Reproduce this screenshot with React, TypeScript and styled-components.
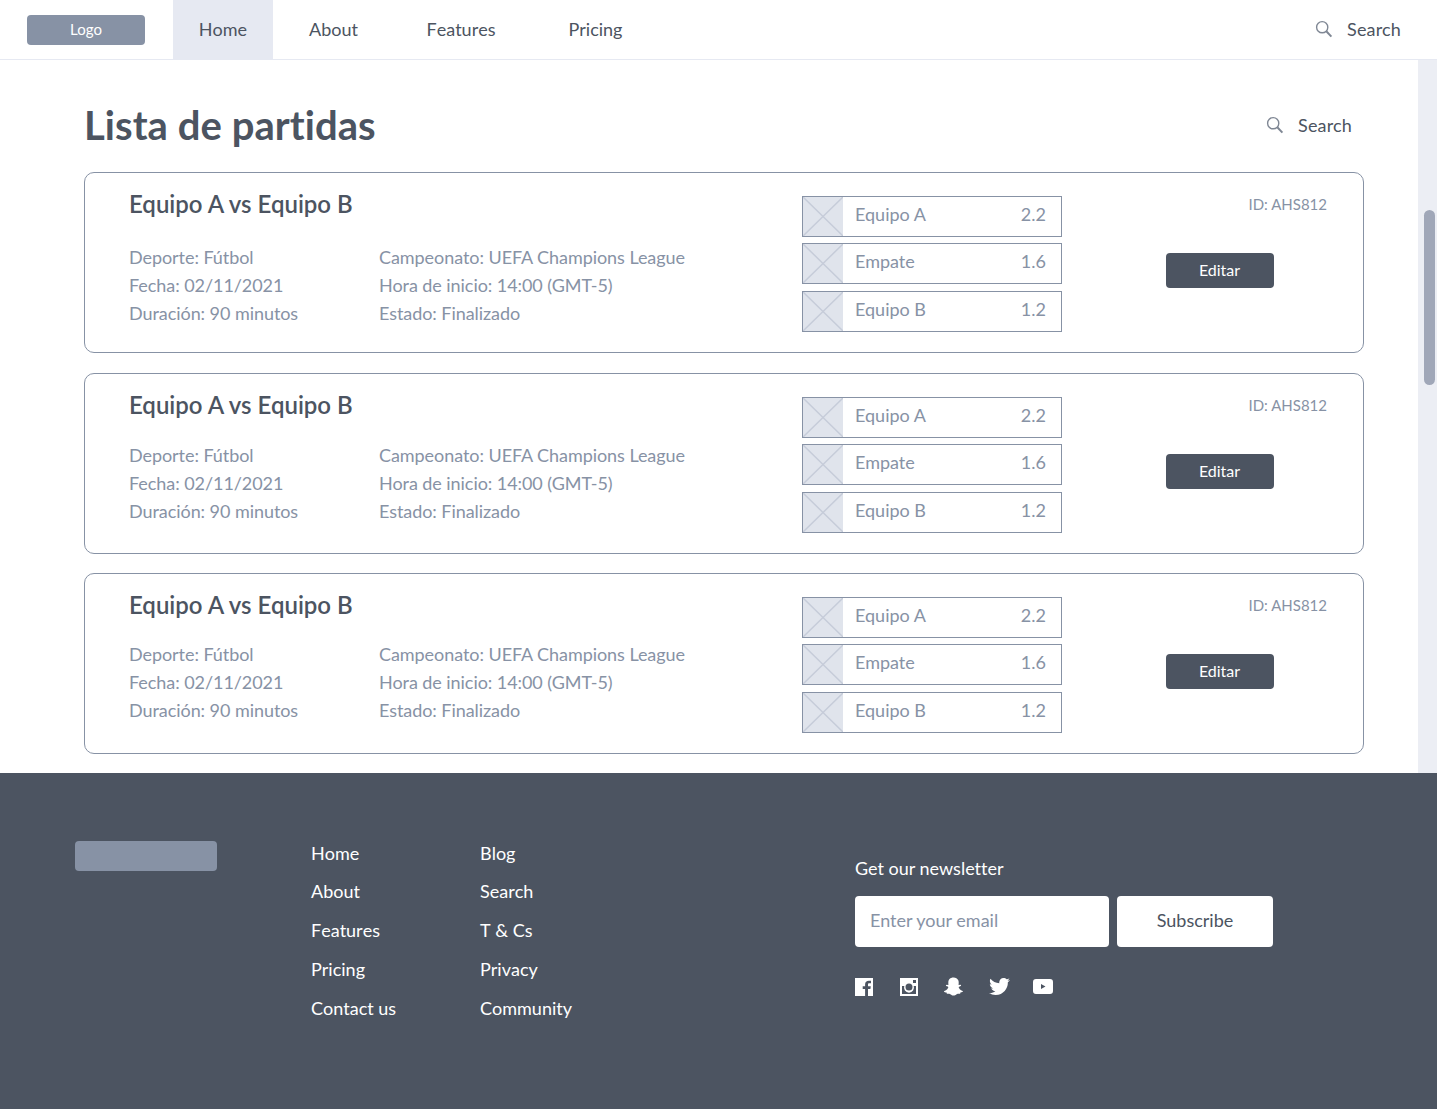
import React from 'react';
import styled, { createGlobalStyle } from 'styled-components';
import { FaSnapchatGhost, FaTwitter } from 'react-icons/fa';

const colors = {
  dark: '#4c5461',
  muted: '#8792a5',
  light: '#e6e9f2',
  tile: '#e0e4ec',
  cross: '#c6ccd9',
};

const GlobalStyle = createGlobalStyle`
  html, body {
    margin: 0;
    padding: 0;
    background: #fff;
    font-family: Lato, "Liberation Sans", sans-serif;
    font-variant-ligatures: none;
    overflow: hidden;
  }
  * { box-sizing: border-box; }
`;

const Page = styled.div`
  width: 1437px;
  height: 1109px;
  display: flex;
  flex-direction: column;
`;

const TopBar = styled.header`
  height: 60px;
  flex: none;
  display: flex;
  align-items: stretch;
  padding: 0 36px 0 27px;
  border-bottom: 1px solid ${colors.light};
`;

const LogoBox = styled.div`
  width: 118px;
  height: 30px;
  margin: 15px 28px 0 0;
  border-radius: 4px;
  background: ${colors.muted};
  color: #fff;
  font-size: 15px;
  line-height: 28px;
  text-align: center;
`;

const NavLink = styled.a<{ $width: number; $active?: boolean }>`
  width: ${props => props.$width}px;
  padding-bottom: 2px;
  display: flex;
  align-items: center;
  justify-content: center;
  font-size: 18px;
  font-kerning: none;
  color: ${colors.dark};
  background: ${props => (props.$active ? colors.light : 'transparent')};
`;

const SearchBox = styled.div`
  margin-left: auto;
  padding-bottom: 1px;
  display: flex;
  align-items: center;
  gap: 14px;
  font-size: 18px;
  letter-spacing: 0.15px;
  color: ${colors.dark};
`;

const Middle = styled.div`
  height: 713px;
  flex: none;
  display: flex;
`;

const Content = styled.main`
  width: 1418px;
  padding: 0 54px 0 84px;
`;

const TitleRow = styled.div`
  height: 112px;
  padding: 18px 12px 0 0;
  display: flex;
  align-items: center;
  justify-content: space-between;
`;

const Title = styled.h1`
  margin: 0;
  font-size: 40px;
  font-weight: 700;
  letter-spacing: 0.05px;
  color: ${colors.dark};
`;

const CardList = styled.div`
  display: flex;
  flex-direction: column;
  gap: 19.67px;
`;

const Card = styled.article`
  height: 181px;
  display: flex;
  padding: 0 36px 0 44px;
  border: 1px solid ${colors.muted};
  border-radius: 10px;
`;

const Info = styled.div`
  width: 673px;
  flex: none;
`;

const CardTitle = styled.h2`
  margin: 15px 0 0;
  font-size: 24px;
  line-height: 32px;
  font-weight: 600;
  color: ${colors.dark};
`;

const Details = styled.div<{ $top: number }>`
  margin-top: ${props => props.$top}px;
  display: grid;
  grid-template-columns: 250px 1fr;
  grid-auto-rows: 28px;
  font-size: 18px;
  line-height: 28px;
  letter-spacing: -0.06px;
  color: ${colors.muted};
`;

const Odds = styled.div`
  width: 260px;
  flex: none;
  padding-top: 23px;
  display: flex;
  flex-direction: column;
  gap: 6px;
`;

const OddRow = styled.div`
  height: 41px;
  display: flex;
  align-items: center;
  padding-right: 15px;
  border: 1px solid ${colors.muted};
  font-size: 18px;
  color: ${colors.muted};
  &:last-child {
    margin-top: 1px;
  }
`;

const Tile = styled.svg`
  width: 40px;
  height: 39px;
  flex: none;
  background: ${colors.tile};
`;

const OddName = styled.span`
  margin: 0 0 5px 12px;
`;

const Price = styled.span`
  margin: 0 0 5px auto;
`;

const Side = styled.div`
  flex: 1;
  display: flex;
  flex-direction: column;
  align-items: flex-end;
`;

const MatchId = styled.div`
  margin-top: 21px;
  height: 20px;
  font-size: 15px;
  line-height: 20px;
  color: ${colors.muted};
`;

const EditButton = styled.button`
  width: 108px;
  height: 35px;
  margin: 39px 53px 0 0;
  padding: 0 1px 2px 0;
  border: none;
  border-radius: 4px;
  background: ${colors.dark};
  color: #fff;
  font-family: inherit;
  font-size: 16px;
`;

const Track = styled.div`
  width: 19px;
  flex: none;
  padding: 150px 2px 0 6px;
  background: #eceef4;
`;

const Thumb = styled.div`
  height: 175px;
  border-radius: 6px;
  background: #a0a7b8;
`;

const Footer = styled.footer`
  flex: 1;
  display: flex;
  padding: 67.7px 0 0 75px;
  background: ${colors.dark};
  color: #fff;
`;

const FooterLogo = styled.div`
  width: 142px;
  height: 30px;
  flex: none;
  margin-right: 94px;
  border-radius: 4px;
  background: ${colors.muted};
`;

const LinkColumn = styled.nav<{ $width: number }>`
  width: ${props => props.$width}px;
  flex: none;
  display: flex;
  flex-direction: column;
  gap: 14.75px;
  font-size: 18px;
  font-kerning: none;
  line-height: 24px;
`;

const Newsletter = styled.div`
  padding-top: 15.3px;
`;

const NewsTitle = styled.div`
  font-size: 18px;
  line-height: 24px;
  margin-bottom: 16px;
`;

const NewsForm = styled.div`
  display: flex;
  gap: 8px;
`;

const EmailInput = styled.input`
  width: 254px;
  height: 51px;
  padding: 0 15px 3px;
  border: none;
  border-radius: 4px;
  background: #fff;
  font-family: inherit;
  font-size: 18px;
  &::placeholder {
    color: ${colors.muted};
    opacity: 1;
  }
`;

const SubscribeButton = styled.button`
  width: 156px;
  height: 51px;
  padding: 0 0 2px;
  border: none;
  border-radius: 4px;
  background: #fff;
  color: ${colors.dark};
  font-family: inherit;
  font-size: 18px;
`;

const Socials = styled.div`
  margin-top: 29px;
  display: grid;
  grid-template-columns: repeat(5, 44.6px);
  align-items: center;
  height: 22px;
  color: #fff;
`;

const SearchIcon = () => (
  <svg width="18" height="18" viewBox="0 0 18 18" fill="none" stroke="#7f8794">
    <circle cx="7.2" cy="7.2" r="5.6" strokeWidth="1.4" />
    <path d="M11.3 11.3 16.4 16.6" strokeWidth="2" />
  </svg>
);

const PlaceholderTile = () => (
  <Tile viewBox="0 0 40 39" preserveAspectRatio="none">
    <path d="M0 0 40 39M40 0 0 39" stroke={colors.cross} strokeWidth="1.5" />
  </Tile>
);

const FacebookIcon = () => (
  <svg width="18" height="18" viewBox="0 0 18 18" fill="currentColor">
    <path d="M0 0h18v18h-5v-7h2.400l.4-2.800H13V6.600c0-.8.3-1.300 1.400-1.300H16V2.800c-.4 0-1.200-.1-2.200-.1-2.200 0-3.700 1.300-3.700 3.700v1.800H7.700V11h2.400v7H0z" />
  </svg>
);

const InstagramIcon = () => (
  <svg width="18" height="18" viewBox="0 0 18 18" fill="currentColor">
    <path
      fillRule="evenodd"
      d="M0 0h18v18H0zM13 2v3h3V2zM2 8v8h14V8h-2.300a5 5 0 1 1-9.400 0zM9 5.500a3.500 3.500 0 1 0 0 7 3.500 3.500 0 0 0 0-7z"
    />
  </svg>
);

const YoutubeIcon = () => (
  <svg width="20" height="15" viewBox="0 0 20 15" fill="currentColor">
    <path
      fillRule="evenodd"
      d="M3 0h14a3 3 0 0 1 3 3v9a3 3 0 0 1-3 3H3a3 3 0 0 1-3-3V3a3 3 0 0 1 3-3zM8 5v5l4.500-2.500z"
    />
  </svg>
);

const matches = [{ top: 23 }, { top: 20 }, { top: 19 }];
const outcomes = [
  { name: 'Equipo A', price: '2.2' },
  { name: 'Empate', price: '1.6' },
  { name: 'Equipo B', price: '1.2' },
];

const App: React.FC = () => (
  <Page>
    <GlobalStyle />
    <TopBar>
      <LogoBox>Logo</LogoBox>
      <NavLink $width={100} $active>Home</NavLink>
      <NavLink $width={121}>About</NavLink>
      <NavLink $width={134}>Features</NavLink>
      <NavLink $width={135}>Pricing</NavLink>
      <SearchBox>
        <SearchIcon />
        Search
      </SearchBox>
    </TopBar>

    <Middle>
      <Content>
        <TitleRow>
          <Title>Lista de partidas</Title>
          <SearchBox>
            <SearchIcon />
            Search
          </SearchBox>
        </TitleRow>
        <CardList>
          {matches.map((match, index) => (
            <Card key={index}>
              <Info>
                <CardTitle>Equipo A vs Equipo B</CardTitle>
                <Details $top={match.top}>
                  <span>Deporte: Fútbol</span>
                  <span>Campeonato: UEFA Champions League</span>
                  <span>Fecha: 02/11/2021</span>
                  <span>Hora de inicio: 14:00 (GMT-5)</span>
                  <span>Duración: 90 minutos</span>
                  <span>Estado: Finalizado</span>
                </Details>
              </Info>
              <Odds>
                {outcomes.map(outcome => (
                  <OddRow key={outcome.name}>
                    <PlaceholderTile />
                    <OddName>{outcome.name}</OddName>
                    <Price>{outcome.price}</Price>
                  </OddRow>
                ))}
              </Odds>
              <Side>
                <MatchId>ID: AHS812</MatchId>
                <EditButton>Editar</EditButton>
              </Side>
            </Card>
          ))}
        </CardList>
      </Content>
      <Track>
        <Thumb />
      </Track>
    </Middle>

    <Footer>
      <FooterLogo />
      <LinkColumn $width={169}>
        <a>Home</a>
        <a>About</a>
        <a>Features</a>
        <a>Pricing</a>
        <a>Contact us</a>
      </LinkColumn>
      <LinkColumn $width={375}>
        <a>Blog</a>
        <a>Search</a>
        <a>T &amp; Cs</a>
        <a>Privacy</a>
        <a>Community</a>
      </LinkColumn>
      <Newsletter>
        <NewsTitle>Get our newsletter</NewsTitle>
        <NewsForm>
          <EmailInput placeholder="Enter your email" />
          <SubscribeButton>Subscribe</SubscribeButton>
        </NewsForm>
        <Socials>
          <FacebookIcon />
          <InstagramIcon />
          <FaSnapchatGhost size={19} />
          <FaTwitter size={21} />
          <YoutubeIcon />
        </Socials>
      </Newsletter>
    </Footer>
  </Page>
);

export default App;
